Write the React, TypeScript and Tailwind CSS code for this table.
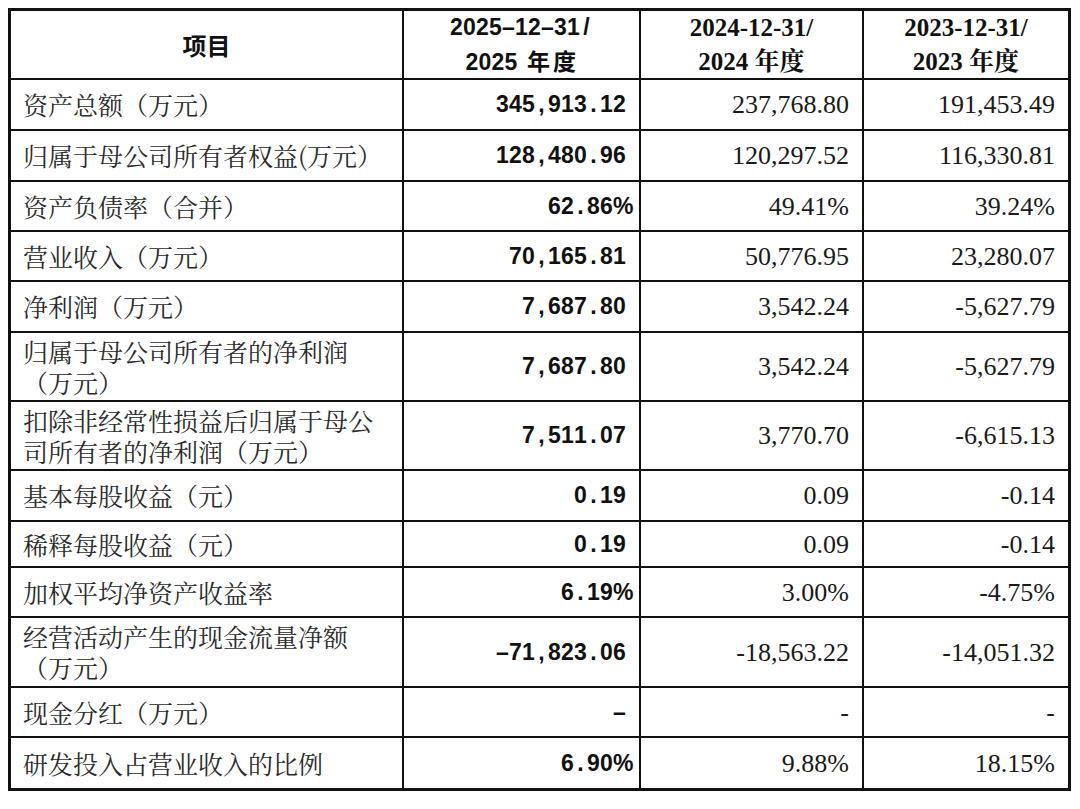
import React from "react";

type Row = {
	label: string;
	wrap?: boolean;
	cur: string;
	y2024: string;
	y2023: string;
};

const rows: Row[] = [
	{ label: "资产总额（万元）", cur: "345,913.12", y2024: "237,768.80", y2023: "191,453.49" },
	{ label: "归属于母公司所有者权益(万元）", cur: "128,480.96", y2024: "120,297.52", y2023: "116,330.81" },
	{ label: "资产负债率（合并）", cur: "62.86%", y2024: "49.41%", y2023: "39.24%" },
	{ label: "营业收入（万元）", cur: "70,165.81", y2024: "50,776.95", y2023: "23,280.07" },
	{ label: "净利润（万元）", cur: "7,687.80", y2024: "3,542.24", y2023: "-5,627.79" },
	{ label: "归属于母公司所有者的净利润（万元）", wrap: true, cur: "7,687.80", y2024: "3,542.24", y2023: "-5,627.79" },
	{ label: "扣除非经常性损益后归属于母公司所有者的净利润（万元）", wrap: true, cur: "7,511.07", y2024: "3,770.70", y2023: "-6,615.13" },
	{ label: "基本每股收益（元）", cur: "0.19", y2024: "0.09", y2023: "-0.14" },
	{ label: "稀释每股收益（元）", cur: "0.19", y2024: "0.09", y2023: "-0.14" },
	{ label: "加权平均净资产收益率", cur: "6.19%", y2024: "3.00%", y2023: "-4.75%" },
	{ label: "经营活动产生的现金流量净额（万元）", wrap: true, cur: "–71,823.06", y2024: "-18,563.22", y2023: "-14,051.32" },
	{ label: "现金分红（万元）", cur: "–", y2024: "-", y2023: "-" },
	{ label: "研发投入占营业收入的比例", cur: "6.90%", y2024: "9.88%", y2023: "18.15%" },
];

const serifCjk = "font-['Noto_Serif_CJK_SC','Noto_Sans_CJK_SC',serif]";
const times = "font-['Liberation_Serif','Noto_Serif_CJK_SC','Noto_Sans_CJK_SC',serif]";

// half-width characters on a fixed 13px pitch, like a Hei-style CJK font
function Pitched({ text }: { text: string }) {
	return (
		<span className="inline-flex">
			{Array.from(text).map((ch, i) => {
				if (ch.charCodeAt(0) > 0x2e80) {
					return (
						<span key={i} className="inline-block w-[26px] text-center">
							{ch}
						</span>
					);
				}
				if (ch === " ") return <span key={i} className="inline-block w-[8px]" />;
				return (
					<span key={i} className="inline-block w-[13px] text-center">
						{ch}
					</span>
				);
			})}
		</span>
	);
}

function SerifHeader({ top, bottom }: { top: string; bottom: string }) {
	return (
		<div className={`flex flex-col items-center justify-center bg-white text-[25px] font-bold leading-[34px] text-[#111] ${times}`}>
			<span>{top}</span>
			<span>{bottom}</span>
		</div>
	);
}

export default function App() {
	return (
		<div className="min-h-[809px] w-[1080px] bg-white pl-[8px] pt-[8px]">
			<div className="w-[1063px] border-[3px] border-[#111]">
				<div className="grid grid-cols-[391px_235px_221px_204px] grid-rows-[67px_49px_49px_48px_48px_49px_67px_67px_49px_44px_48px_68px_48px_50px] gap-[2px] bg-[#111]">
					<div className="flex items-center justify-center bg-white font-['Noto_Sans_CJK_SC',sans-serif] text-[24px] font-bold text-[#111]">
						项目
					</div>
					<div className="flex flex-col items-center justify-center bg-white font-['Liberation_Sans','Noto_Sans_CJK_SC',sans-serif] text-[23px] font-bold leading-[35px] text-[#111]">
						<Pitched text="2025–12–31/" />
						<Pitched text="2025 年度" />
					</div>
					<SerifHeader top="2024-12-31/" bottom="2024 年度" />
					<SerifHeader top="2023-12-31/" bottom="2023 年度" />

					{rows.map((r, i) => (
						<React.Fragment key={i}>
							<div className={`flex items-center bg-white pl-[12px] text-[25px] leading-[31px] text-[#2a2a2a] ${serifCjk}`}>
								<span className={r.wrap ? "w-[352px]" : "whitespace-nowrap"}>{r.label}</span>
							</div>
							<div className="flex items-center justify-end bg-white pr-[13px] font-['Liberation_Sans','Noto_Sans_CJK_SC',sans-serif] text-[23px] font-bold text-[#111]">
								<Pitched text={r.cur} />
							</div>
							<div className={`flex items-center justify-end bg-white pr-[13px] text-[26px] text-[#1a1a1a] ${times}`}>
								{r.y2024}
							</div>
							<div className={`flex items-center justify-end bg-white pr-[13px] text-[26px] text-[#1a1a1a] ${times}`}>
								{r.y2023}
							</div>
						</React.Fragment>
					))}
				</div>
			</div>
		</div>
	);
}
